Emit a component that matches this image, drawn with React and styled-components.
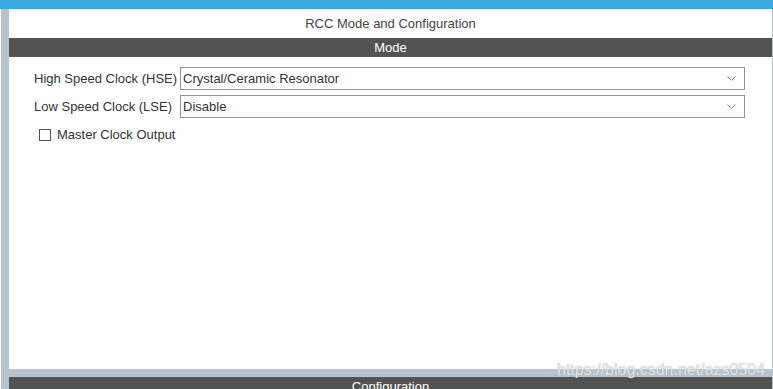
import styled, { createGlobalStyle } from 'styled-components';

const GlobalStyle = createGlobalStyle`
	html, body {
		margin: 0;
		padding: 0;
		background: #fff;
		font-family: "Liberation Sans", Arial, sans-serif;
	}
`;

const Page = styled.div`
	width: 773px;
	height: 389px;
	overflow: hidden;
	display: flex;
	flex-direction: column;
	position: relative;
`;

const TopBar = styled.div`
	height: 9px;
	background: #3aa8dc;
	flex-shrink: 0;
`;

const Body = styled.div`
	flex: 1;
	display: flex;
	padding-left: 1px;
	background: #fff;
`;

const SideStrip = styled.div`
	width: 8px;
	background: #b8c4cb;
	flex-shrink: 0;
`;

const Main = styled.div`
	flex: 1;
	display: flex;
	flex-direction: column;
	background: #b8c4cb;
	border-right: 1px solid #b8c4cb;
`;

const Title = styled.div`
	height: 29px;
	background: #fff;
	display: flex;
	align-items: center;
	justify-content: center;
	font-size: 13px;
	color: #444;
`;

const SectionHeader = styled.div`
	height: ${(p) => p.$height || 19}px;
	background: #525453;
	color: #fff;
	font-size: 13px;
	display: flex;
	align-items: ${(p) => (p.$top ? 'flex-start' : 'center')};
	padding-top: ${(p) => (p.$top ? 2 : 0)}px;
	box-sizing: border-box;
	justify-content: center;
	flex-shrink: 0;
`;

const ModeBody = styled.div`
	height: 312px;
	background: #fff;
	margin-bottom: 8px;
	padding: 10px 27px 0 25px;
	box-sizing: border-box;
	display: flex;
	flex-direction: column;
`;

const Fields = styled.div`
	display: grid;
	grid-template-columns: auto 1fr;
	column-gap: 3px;
	row-gap: 5px;
	align-items: center;
`;

const Label = styled.span`
	font-size: 13px;
	color: #333;
	white-space: nowrap;
`;

const Select = styled.div`
	height: 23px;
	border: 1px solid #939393;
	box-sizing: border-box;
	display: flex;
	align-items: center;
	justify-content: space-between;
	padding: 0 8px 0 2px;
	font-size: 13px;
	color: #333;
	background: #fff;
`;

const CheckRow = styled.label`
	display: flex;
	align-items: center;
	gap: 6px;
	margin: 9px 0 0 5px;
	font-size: 13px;
	color: #333;
`;

const Box = styled.span`
	width: 12px;
	height: 12px;
	border: 1px solid #555;
	box-sizing: border-box;
	background: #fff;
`;

const Watermark = styled.div`
	position: absolute;
	left: 557px;
	top: 361px;
	font-size: 16px;
	color: rgba(255, 255, 255, 0.8);
	text-shadow: 0 0 1px #8a9094;
	white-space: nowrap;
	pointer-events: none;
`;

const Chevron = () => (
	<svg width="9" height="5" viewBox="0 0 9 5">
		<path d="M0.5 0.5 L4.5 4.5 L8.5 0.5" fill="none" stroke="#8a8a8a" strokeWidth="1" />
	</svg>
);

const Dropdown = ({ value }) => (
	<Select>
		<span>{value}</span>
		<Chevron />
	</Select>
);

export default function App() {
	return (
		<>
			<GlobalStyle />
			<Page>
				<TopBar />
				<Body>
					<SideStrip />
					<Main>
						<Title>RCC Mode and Configuration</Title>
						<SectionHeader>Mode</SectionHeader>
						<ModeBody>
							<Fields>
								<Label>High Speed Clock (HSE)</Label>
								<Dropdown value="Crystal/Ceramic Resonator" />
								<Label>Low Speed Clock (LSE)</Label>
								<Dropdown value="Disable" />
							</Fields>
							<CheckRow>
								<Box />
								Master Clock Output
							</CheckRow>
						</ModeBody>
						<SectionHeader $top $height={12}>Configuration</SectionHeader>
					</Main>
				</Body>
				<Watermark>https://blog.csdn.net/azs0504</Watermark>
			</Page>
		</>
	);
}
